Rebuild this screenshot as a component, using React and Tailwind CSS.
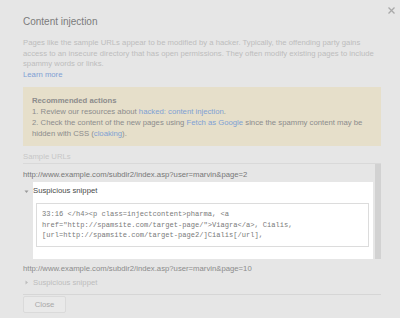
import React from 'react';

const Caret = ({ open, color }) => (
    <svg width="10" height="10" viewBox="0 0 10 10" className="shrink-0">
        {open ? (
            <path d="M1.5 3.5 L5.5 3.5 L3.5 6 Z" fill={color} />
        ) : (
            <path d="M2.5 2.5 L5 4.5 L2.5 6.5 Z" fill={color} />
        )}
    </svg>
);

const App = () => {
    return (
        <div className="relative h-[318px] w-[400px] overflow-hidden bg-[#e6e6e6] font-['Liberation_Sans',Arial,sans-serif]">
            {/* cerrar */}
            <button className="absolute right-[4px] top-[6px] p-[1px]" title="cerrar">
                <svg width="7" height="7" viewBox="0 0 7 7">
                    <path d="M0.5 0.5 L6.5 6.5 M6.5 0.5 L0.5 6.5" stroke="#a9a9a9" strokeWidth="1.3" />
                </svg>
            </button>

            <div className="pl-[23px] pr-[19px] pt-[16px]">
                <h2 className="text-[10px] leading-[12px] text-[#7b7b7b]">Content injection</h2>

                <p className="mt-[10px] text-[7.72px] leading-[10.5px] text-[#bdbdbd]">
                    Pages like the sample URLs appear to be modified by a hacker. Typically, the offending party gains<br />
                    access to an insecure directory that has open permissions. They often modify existing pages to include<br />
                    spammy words or links.
                </p>
                <a className="block text-[7.72px] leading-[10.5px] text-[#7f9fd4]">Learn more</a>

                {/* ACCIONES RECOMENDADAS */}
                <div className="mt-[7px] bg-[#e6dfca] px-[9px] pb-[7px] pt-[8px] text-[7.72px] leading-[11px] text-[#8c8c8c]">
                    <p className="font-bold">Recommended actions</p>
                    <p>1. Review our resources about <a className="text-[#7f9fd4]">hacked: content injection</a>.</p>
                    <p>
                        2. Check the content of the new pages using <a className="text-[#7f9fd4]">Fetch as Google</a> since the spammy content may be<br />
                        hidden with CSS (<a className="text-[#7f9fd4]">cloaking</a>).
                    </p>
                </div>

                <p className="mt-[6px] text-[7.72px] leading-[10px] text-[#c6c6c6]">Sample URLs</p>

                {/* URLS DE MUESTRA */}
                <div className="mt-[1px] flex h-[96px] overflow-hidden border-t border-t-[#d9d9d9]">
                    <div className="flex-1">
                        <p className="mt-[6px] text-[7.72px] leading-[10px] text-[#777]">
                            http://www.example.com/subdir2/index.asp?user=marvin&amp;page=2
                        </p>
                        <div className="mt-[2px] flex">
                            <div className="w-[10px] pt-[5px]">
                                <Caret open color="#9a9a9a" />
                            </div>
                            <div className="mr-[2px] flex-1 bg-white pb-[12px] pt-[4px]">
                                <p className="text-[7.72px] leading-[10px] text-[#4a4a4a]">Suspicious snippet</p>
                                <div className="ml-[3px] mr-[4px] mt-[7px] border border-[#dcdcdc] px-[5px] pb-[5px] pt-[5px] font-['Liberation_Mono','Courier_New',monospace] text-[7.08px] leading-[10.7px] text-[#7a7a7a]">
                                    <p>33:16 &lt;/h4&gt;&lt;p class=injectcontent&gt;pharma, &lt;a</p>
                                    <p>href="http://spamsite.com/target-page/"&gt;Viagra&lt;/a&gt;, Cialis,</p>
                                    <p>[url=http://spamsite.com/target-page2/]Cialis[/url],</p>
                                </div>
                            </div>
                        </div>
                    </div>
                    <div className="w-[6px] bg-[#d2d2d2]" />
                </div>

                <p className="mt-[5px] text-[7.72px] leading-[10px] text-[#8c8c8c]">
                    http://www.example.com/subdir2/index.asp?user=marvin&amp;page=10
                </p>
                <div className="mt-[4px] flex items-center">
                    <div className="w-[10px]">
                        <Caret color="#bdbdbd" />
                    </div>
                    <p className="text-[7.72px] leading-[10px] text-[#bdbdbd]">Suspicious snippet</p>
                </div>

                <div className="mt-[6px] border-t border-t-[#d6d6d6] pt-[1px]">
                    <button className="flex h-[17px] w-[43px] items-center justify-center rounded-[2px] border border-[#dadada] bg-[#e9e9e9] text-[7.72px] leading-[10px] text-[#a8a8a8]">
                        Close
                    </button>
                </div>
            </div>
        </div>
    );
};

export default App;
